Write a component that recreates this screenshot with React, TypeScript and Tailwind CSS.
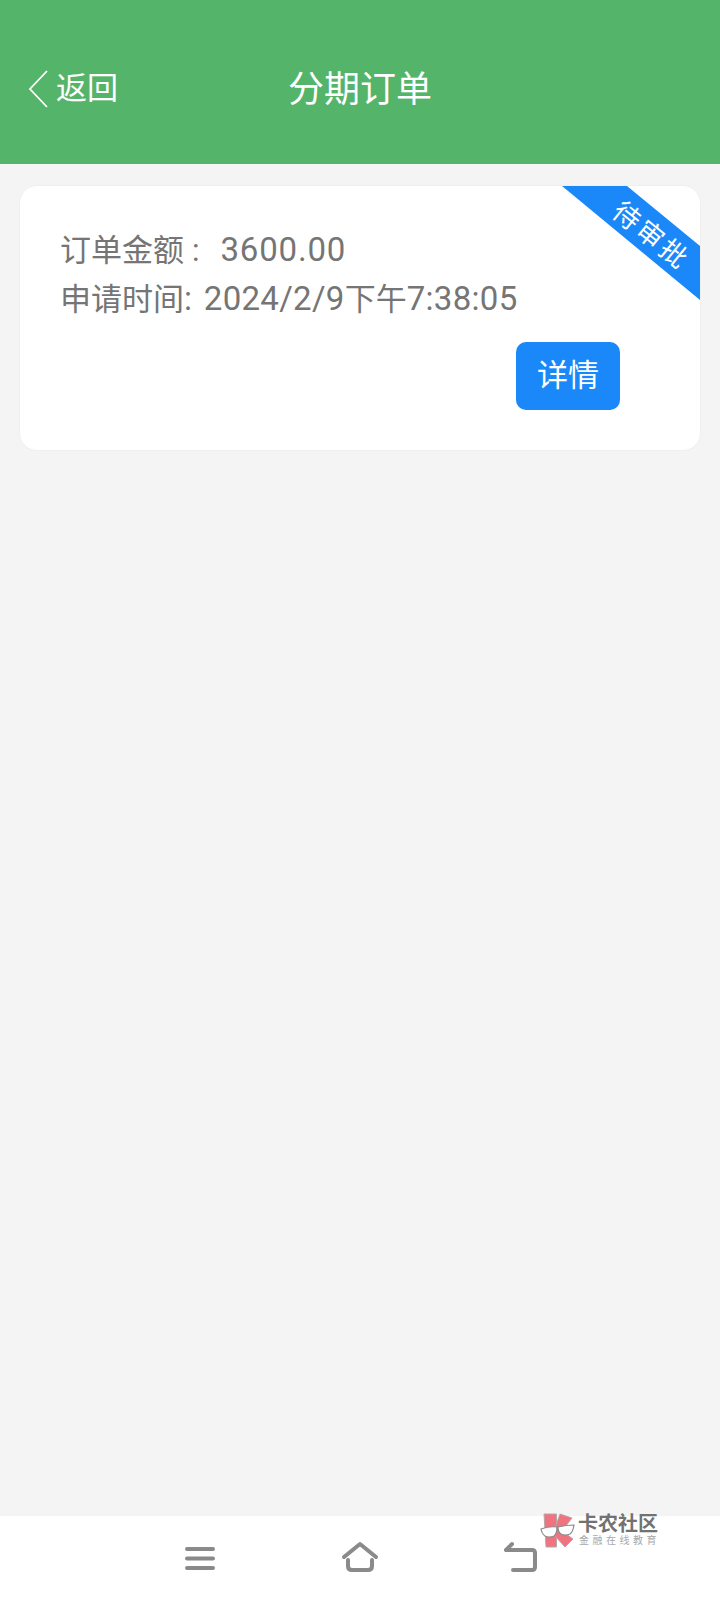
const font = "font-['Roboto','Noto_Sans_CJK_SC',sans-serif]"

function NavBar() {
    return (
        <div className="relative h-[84px] shrink-0 bg-white flex items-start">
            {/* menu */}
            <svg className="absolute left-[183px] top-[30px]" width="34" height="26" viewBox="0 0 34 26" fill="none" stroke="#8a8a8a" strokeWidth="4" strokeLinecap="round">
                <path d="M4 3h26M4 12.500h26M4 22h26" />
            </svg>
            {/* home */}
            <svg className="absolute left-[340px] top-[24px]" width="40" height="32" viewBox="0 0 40 32" fill="none" stroke="#8a8a8a" strokeWidth="4" strokeLinecap="round" strokeLinejoin="round">
                <path d="M4 17 20 4l16 13" />
                <path d="M8 20v6q0 4 4 4h16q4 0 4-4v-6" />
            </svg>
            {/* back */}
            <svg className="absolute left-[503px] top-[25px]" width="36" height="32" viewBox="0 0 36 32" fill="none" stroke="#8a8a8a" strokeWidth="4" strokeLinecap="round" strokeLinejoin="round">
                <path d="M9 3 3 9h26q3 0 3 3v14q0 3-3 3H10" />
            </svg>
        </div>
    )
}

function Watermark() {
    return (
        <div className="absolute left-[540px] top-[1511px] flex items-center gap-[2px]">
            <svg width="36" height="38" viewBox="0 0 36 38">
                <path d="M4 3h12.500v33H6z" fill="#ef7480" stroke="#b9a6a8" />
                <path d="M16 14 20 3l12 4-10 13 11 8-8 8-10-11z" fill="#ef7480" stroke="#b9a6a8" />
                <path d="M1 18q8-3 16-2 0 7-3 9-5 2-9 0-3-2-4-7z" fill="#fff" stroke="#8a8a8a" strokeWidth="1.2" />
                <path d="M18 16q8-2 16-2-1 7-4 9-5 2-9 0-3-2-3-7z" fill="#fff" stroke="#8a8a8a" strokeWidth="1.2" />
            </svg>
            <div className="flex flex-col">
                <span className="text-[20px] leading-[22px] font-bold text-[#727272]">卡农社区</span>
                <span className="text-[10px] leading-[12px] text-[#a8a8a8] tracking-[3.500px] pl-[1px]">金融在线教育</span>
            </div>
        </div>
    )
}

export default function App() {
    return (
        <div className={`relative w-[720px] h-[1600px] flex flex-col bg-[#f4f4f4] ${font}`}>
            {/* Header */}
            <div className="relative h-[164px] shrink-0 bg-[#54b469] text-white">
                <div className="h-full pt-[16px] flex items-center justify-center text-[36px]">分期订单</div>
                <div className="absolute left-[28px] top-[70px] flex items-center">
                    <svg width="20" height="38" viewBox="0 0 20 38" fill="none" stroke="#fff" strokeWidth="1.8">
                        <path d="M19 1 2 19l17 18" />
                    </svg>
                    <span className="ml-[8px] text-[31px] leading-[38px]">返回</span>
                </div>
            </div>

            {/* Order list */}
            <div className="flex-1 px-[19px] pt-[21px]">
                <div className="relative h-[266px] rounded-[18px] bg-white border border-[#efefef] overflow-hidden pl-[40px] pt-[40px]">
                    <div className="text-[31px] leading-[48px] text-[#757575]">
                        <div>订单金额<span className="ml-[8px]">:</span><span className="ml-[21px] text-[33px] tracking-[0.8px]">3600.00</span></div>
                        <div>申请时间<span className="text-[33px] tracking-[0.3px]">: </span><span className="ml-[3px] text-[33px] tracking-[0.3px]">2024/2/9</span>下午<span className="text-[33px] tracking-[0.3px]">7:38:05</span></div>
                    </div>
                    <div className="flex justify-end pr-[80px] mt-[18px]">
                        <button className="w-[104px] h-[68px] rounded-[10px] bg-[#1a88f8] text-white text-[31px]">详情</button>
                    </div>
                    {/* Status ribbon */}
                    <div className="absolute top-0 right-0 w-[138px] h-[114px] bg-[#1a88f8] [clip-path:polygon(0_0,65px_0,138px_60px,138px_114px)]">
                        <span className="absolute left-[41px] top-[34px] w-[96px] text-center text-[27px] leading-[32px] tracking-[3px] text-white rotate-[39deg] whitespace-nowrap">待审批</span>
                    </div>
                </div>
            </div>

            <NavBar />
            <Watermark />
        </div>
    )
}
